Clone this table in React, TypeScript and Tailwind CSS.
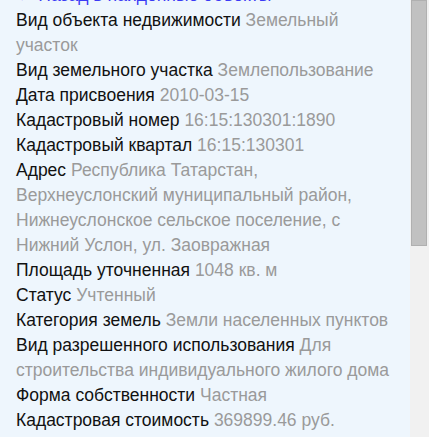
const rows: { label: string; value: string }[] = [
  { label: "Вид объекта недвижимости", value: "Земельный участок" },
  { label: "Вид земельного участка", value: "Землепользование" },
  { label: "Дата присвоения", value: "2010-03-15" },
  { label: "Кадастровый номер", value: "16:15:130301:1890" },
  { label: "Кадастровый квартал", value: "16:15:130301" },
  {
    label: "Адрес",
    value:
      "Республика Татарстан, Верхнеуслонский муниципальный район, Нижнеуслонское сельское поселение, с Нижний Услон, ул. Заовражная",
  },
  { label: "Площадь уточненная", value: "1048 кв. м" },
  { label: "Статус", value: "Учтенный" },
  { label: "Категория земель", value: "Земли населенных пунктов" },
  { label: "Вид разрешенного использования", value: "Для строительства индивидуального жилого дома" },
  { label: "Форма собственности", value: "Частная" },
  { label: "Кадастровая стоимость", value: "369899.46 руб." },
];

export default function App() {
  return (
    <div
      className="flex h-[437px] w-[429px] overflow-hidden"
      style={{ fontFamily: '"Liberation Sans", Arial, sans-serif' }}
    >
      <div className="flex-1 overflow-hidden bg-[#eef6fd] px-4 text-[17.5px] leading-[25px]">
        <div className="-mt-[17px]">
          <a href="#" className="block text-[#3b3bf5]">
            ← Назад в найденные объекты
          </a>
          {rows.map((r) => (
            <div key={r.label}>
              <span className="text-[#111]">{r.label}</span>{" "}
              <span className="text-[#9a9a9a]">{r.value}</span>
            </div>
          ))}
        </div>
      </div>
      <div className="w-[19px] bg-[#f1f1f1] pl-[1px] pr-[2px]">
        <div className="h-[246px] border border-[#b0b0b0] bg-[#c1c1c1]" />
      </div>
    </div>
  );
}
